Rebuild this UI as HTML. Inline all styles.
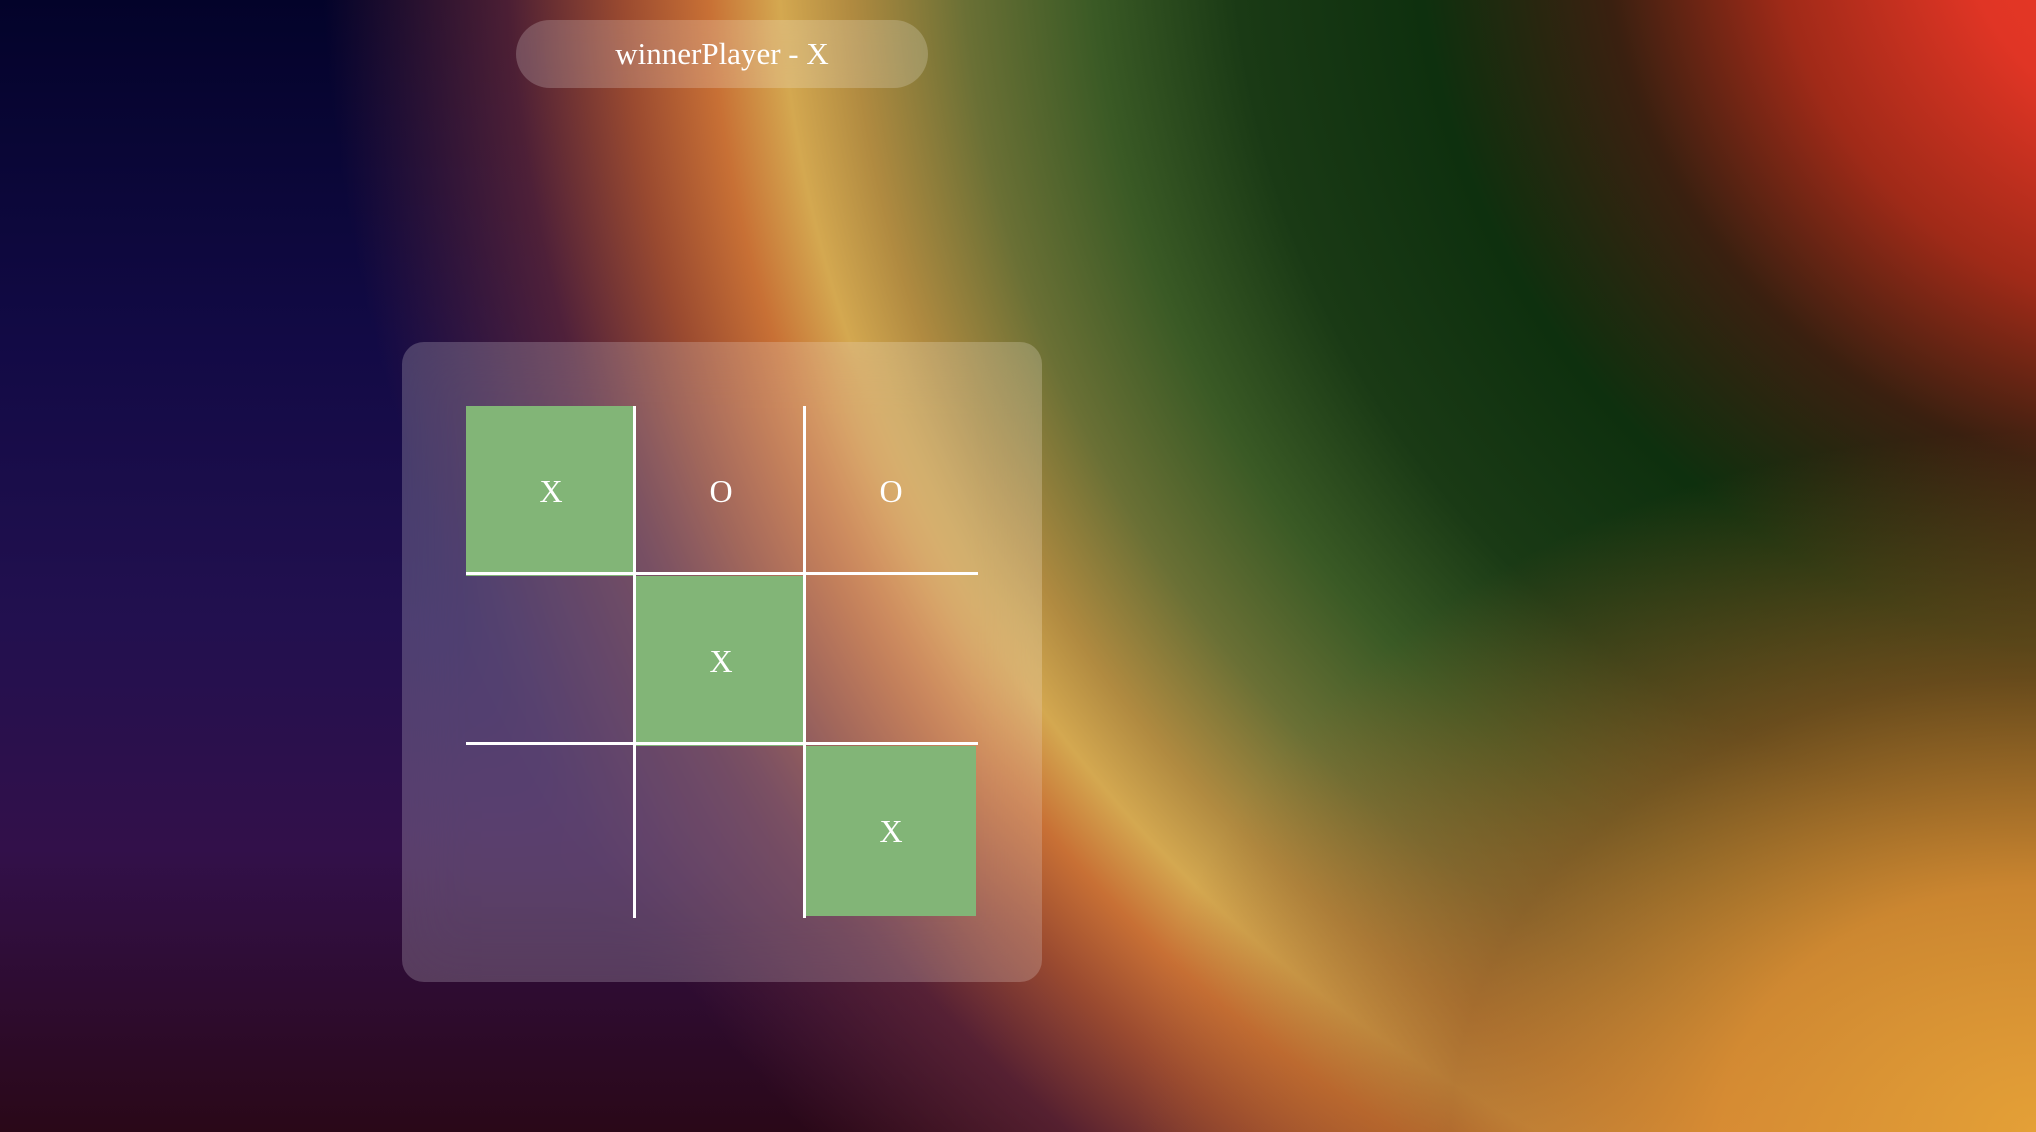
<!DOCTYPE html>
<html><head><meta charset="utf-8"><style>
html,body{margin:0;padding:0;width:2036px;height:1132px;overflow:hidden;background:#0a0820}
.bg{position:absolute;left:0;top:0;width:2036px;height:1132px;
background:
radial-gradient(ellipse 1424px 1391px at 2200px -100px,
 #f03a25 0%, #e03525 17%, #a02a18 30%, #3a2010 42%, #0e300e 55%, #1a3a15 68%, #3a5a25 78%, #6a7035 87%, #b08a40 95%, #d4a850 100%, #c87035 105%, #9a4a30 111%, rgba(100,40,55,0.75) 119%, rgba(60,20,70,0) 132%),
linear-gradient(180deg,#03032a 0%,#120a45 30%,#22104f 55%,#32104a 75%,#2a0818 100%);}
.br{position:absolute;left:0;top:0;width:2036px;height:1132px;
background:radial-gradient(ellipse 900px 700px at 2036px 1132px, rgba(228,160,55,1) 0%, rgba(220,140,50,0.9) 35%, rgba(160,90,35,0.6) 65%, rgba(120,70,30,0) 100%);}
.pill{position:absolute;left:516px;top:20px;width:412px;height:68px;border-radius:34px;background:rgba(255,255,255,0.2);backdrop-filter:blur(10px);color:#fff;font-family:"Liberation Serif",serif;font-size:31px;line-height:68px;text-align:center}
.card{position:absolute;left:402px;top:342px;width:640px;height:640px;border-radius:22px;background:rgba(255,255,255,0.2);backdrop-filter:blur(30px)}
.cell{position:absolute;width:170px;height:170px;color:#fff;font-family:"Liberation Serif",serif;font-size:32px;line-height:170px;text-align:center}
.g{background:#82b577}
.v{position:absolute;width:3px;background:#fff}
.h{position:absolute;height:3px;background:#fff}
</style></head><body>
<div class="bg"></div>
<div class="br"></div>
<div class="pill">winnerPlayer - X</div>
<div class="card"></div>
<div class="cell g" style="left:466px;top:406px">X</div>
<div class="cell" style="left:636px;top:406px">O</div>
<div class="cell" style="left:806px;top:406px">O</div>
<div class="cell g" style="left:636px;top:576px">X</div>
<div class="cell g" style="left:806px;top:746px">X</div>
<div class="v" style="left:633px;top:406px;height:512px"></div>
<div class="v" style="left:803px;top:406px;height:512px"></div>
<div class="h" style="left:466px;top:572px;width:512px"></div>
<div class="h" style="left:466px;top:742px;width:512px"></div>
</body></html>
